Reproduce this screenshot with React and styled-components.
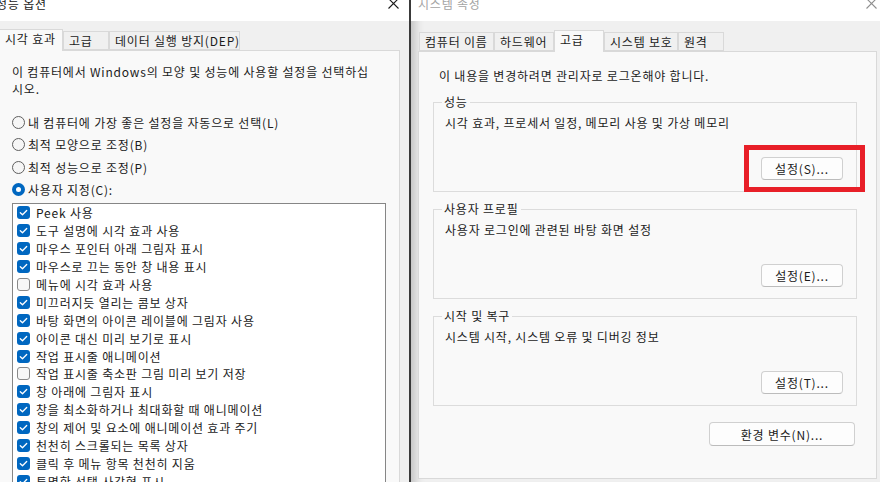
import React from "react";
import styled, { createGlobalStyle } from "styled-components";

const GlobalStyle = createGlobalStyle`
  html, body {
    margin: 0;
    padding: 0;
    overflow: hidden;
    background: #f0f0f0;
  }
  body {
    font-family: "Noto Sans CJK KR", "Noto Sans", sans-serif;
    font-size: 12px;
    letter-spacing: 0.8px;
    color: #1b1b1b;
  }
  * { box-sizing: border-box; }
`;

const VISUAL_OPTIONS = [
  ["Peek 사용", true],
  ["도구 설명에 시각 효과 사용", true],
  ["마우스 포인터 아래 그림자 표시", true],
  ["마우스로 끄는 동안 창 내용 표시", true],
  ["메뉴에 시각 효과 사용", false],
  ["미끄러지듯 열리는 콤보 상자", true],
  ["바탕 화면의 아이콘 레이블에 그림자 사용", true],
  ["아이콘 대신 미리 보기로 표시", true],
  ["작업 표시줄 애니메이션", true],
  ["작업 표시줄 축소판 그림 미리 보기 저장", false],
  ["창 아래에 그림자 표시", true],
  ["창을 최소화하거나 최대화할 때 애니메이션", true],
  ["창의 제어 및 요소에 애니메이션 효과 주기", true],
  ["천천히 스크롤되는 목록 상자", true],
  ["클릭 후 메뉴 항목 천천히 지움", true],
  ["투명한 선택 사각형 표시", true],
  ["화면 글꼴의 가장자리 다듬기", true],
];

const PRESETS = [
  ["내 컴퓨터에 가장 좋은 설정을 자동으로 선택(L)", false],
  ["최적 모양으로 조정(B)", false],
  ["최적 성능으로 조정(P)", false],
  ["사용자 지정(C):", true],
];

const LEFT_TABS = [
  ["시각 효과", 64, true],
  ["고급", 46, false],
  ["데이터 실행 방지(DEP)", 131, false],
];

const RIGHT_TABS = [
  ["컴퓨터 이름", 75, false],
  ["하드웨어", 60, false],
  ["고급", 50, true],
  ["시스템 보호", 74, false],
  ["원격", 46, false],
];

const GROUPS = [
  ["성능", "시각 효과, 프로세서 일정, 메모리 사용 및 가상 메모리", "설정(S)...", true],
  ["사용자 프로필", "사용자 로그인에 관련된 바탕 화면 설정", "설정(E)...", false],
  ["시작 및 복구", "시스템 시작, 시스템 오류 및 디버깅 정보", "설정(T)...", false],
];

function CloseGlyph({ color }) {
  return (
    <svg width="11" height="11" viewBox="0 0 11 11">
      <path d="M0.5 0.5 L10.5 10.5 M10.5 0.5 L0.5 10.5" stroke={color} strokeWidth="1.1" fill="none" />
    </svg>
  );
}

function CheckMark() {
  return (
    <svg width="13" height="13" viewBox="0 0 13 13">
      <path d="M3.3 6.7 L5.5 8.8 L9.7 4.5" stroke="#fff" strokeWidth="1.3" fill="none" strokeLinecap="round" strokeLinejoin="round" />
    </svg>
  );
}

export default function App() {
  return (
    <Screen>
      <GlobalStyle />
      <LeftWindow>
        <TitleBar $padRight={10}>
          <Title $shift={-4}>성능 옵션</Title>
          <CloseButton>
            <CloseGlyph color="#1b1b1b" />
          </CloseButton>
        </TitleBar>
        <DialogBody $padLeft={0} $padRight={9} $shift={-1}>
          <TabStrip $h={29}>
            {LEFT_TABS.map(([label, w, active]) => (
              <Tab key={label} $w={w} $active={active}>
                {label}
              </Tab>
            ))}
          </TabStrip>
          <TabPage $padTop={12} $padX={12} $padRight={13}>
            <Intro>
              이 컴퓨터에서 Windows의 모양 및 성능에 사용할 설정을 선택하십
              <br />
              시오.
            </Intro>
            <RadioList>
              {PRESETS.map(([label, on]) => (
                <RadioRow key={label}>
                  <RadioDot $on={on} />
                  {label}
                </RadioRow>
              ))}
            </RadioList>
            <CheckList>
              {VISUAL_OPTIONS.map(([label, on]) => (
                <CheckRow key={label}>
                  <CheckBox $on={on}>{on && <CheckMark />}</CheckBox>
                  {label}
                </CheckRow>
              ))}
            </CheckList>
          </TabPage>
        </DialogBody>
      </LeftWindow>

      <Divider />

      <RightWindow>
        <TitleBar $padRight={3}>
          <Title $inactive $shift={7}>시스템 속성</Title>
          <CloseButton>
            <CloseGlyph color="#8f8f8f" />
          </CloseButton>
        </TitleBar>
        <DialogBody $padLeft={7} $padRight={3} $shift={0}>
          <TabStrip $h={30} $indent={1}>
            {RIGHT_TABS.map(([label, w, active]) => (
              <Tab key={label} $w={w} $active={active}>
                {label}
              </Tab>
            ))}
          </TabStrip>
          <TabPage $padTop={16} $padX={14} $padRight={19} $bottom>
            <Notice>이 내용을 변경하려면 관리자로 로그온해야 합니다.</Notice>
            <GroupStack>
              {GROUPS.map(([title, text, button, marked]) => (
                <GroupBox key={title}>
                  <GroupLabel>{title}</GroupLabel>
                  <GroupBody>
                    <GroupText>{text}</GroupText>
                    {marked ? (
                      <Highlight>
                        <PushButton $w={82}>{button}</PushButton>
                      </Highlight>
                    ) : (
                      <ButtonSlot>
                        <PushButton $w={82}>{button}</PushButton>
                      </ButtonSlot>
                    )}
                  </GroupBody>
                </GroupBox>
              ))}
            </GroupStack>
            <FooterRow>
              <PushButton $w={146} $h={24}>환경 변수(N)...</PushButton>
            </FooterRow>
          </TabPage>
        </DialogBody>
      </RightWindow>
    </Screen>
  );
}

const Screen = styled.main`
  display: flex;
  width: 880px;
  height: 482px;
  overflow: hidden;
  background: #f0f0f0;
`;

const LeftWindow = styled.section`
  width: 409px;
  flex: none;
  display: flex;
  flex-direction: column;
  overflow: hidden;
  background: #f0f0f0;
`;

const Divider = styled.div`
  width: 2px;
  flex: none;
  background: #3a3a3a;
`;

const RightWindow = styled.section`
  flex: 1;
  display: flex;
  flex-direction: column;
  overflow: hidden;
  background: #f0f0f0;
  box-shadow: inset 12px 0 10px -8px rgba(0, 0, 0, 0.2);
`;

const TitleBar = styled.header`
  height: 21px;
  flex: none;
  display: flex;
  justify-content: space-between;
  align-items: flex-start;
  padding-right: ${(p) => p.$padRight}px;
  background: #ffffff;
  overflow: hidden;
`;

const Title = styled.span`
  margin-top: -4px;
  margin-left: ${(p) => p.$shift}px;
  font-size: 12px;
  line-height: 16px;
  color: ${(p) => (p.$inactive ? "#a3a3a3" : "#1b1b1b")};
  white-space: nowrap;
`;

const CloseButton = styled.span`
  display: flex;
  margin-top: -2px;
`;

const DialogBody = styled.div`
  flex: 1;
  display: flex;
  flex-direction: column;
  padding: 0 ${(p) => p.$padRight}px 0 ${(p) => p.$padLeft}px;
  margin-left: ${(p) => p.$shift}px;
  min-height: 0;
`;

const TabStrip = styled.div`
  height: ${(p) => p.$h}px;
  flex: none;
  display: flex;
  align-items: flex-end;
  padding-left: ${(p) => p.$indent || 0}px;
  position: relative;
  z-index: 1;
`;

const Tab = styled.div`
  width: ${(p) => p.$w}px;
  height: ${(p) => (p.$active ? 22 : 19)}px;
  margin-bottom: ${(p) => (p.$active ? -1 : 0)}px;
  padding: 0 0 0 5px;
  border: 1px solid #d9d9d9;
  border-bottom: ${(p) => (p.$active ? "none" : "1px solid #d9d9d9")};
  background: ${(p) => (p.$active ? "#f9f9f9" : "#f0f0f0")};
  font-size: 12px;
  line-height: 17px;
  white-space: nowrap;
  overflow: hidden;
  color: #1b1b1b;
`;

const TabPage = styled.div`
  flex: 1;
  display: flex;
  flex-direction: column;
  padding: ${(p) => p.$padTop}px ${(p) => p.$padRight}px 0 ${(p) => p.$padX}px;
  background: #f9f9f9;
  border: 1px solid #d9d9d9;
  margin-bottom: ${(p) => (p.$bottom ? 3 : -40)}px;
  min-height: 0;
`;

const Intro = styled.p`
  margin: 0;
  line-height: 17px;
  white-space: nowrap;
`;

const RadioList = styled.div`
  margin-top: 14px;
  display: flex;
  flex-direction: column;
`;

const RadioRow = styled.label`
  height: 22.5px;
  display: flex;
  align-items: center;
  gap: 3px;
  white-space: nowrap;
`;

const RadioDot = styled.span`
  width: 13px;
  height: 13px;
  flex: none;
  border-radius: 50%;
  display: flex;
  align-items: center;
  justify-content: center;
  border: ${(p) => (p.$on ? "none" : "1px solid #5f5f5f")};
  background: ${(p) => (p.$on ? "#0067c0" : "#f6f6f6")};
  &::after {
    content: "";
    display: ${(p) => (p.$on ? "block" : "none")};
    width: 5px;
    height: 5px;
    border-radius: 50%;
    background: #ffffff;
  }
`;

const CheckList = styled.div`
  margin-top: 2px;
  width: 374px;
  padding: 0 0 0 4px;
  border: 1px solid #868686;
  background: #ffffff;
  display: flex;
  flex-direction: column;
`;

const CheckRow = styled.label`
  height: 17.9px;
  flex: none;
  display: flex;
  align-items: center;
  gap: 6px;
  white-space: nowrap;
`;

const CheckBox = styled.span`
  width: 13px;
  height: 13px;
  flex: none;
  display: flex;
  border-radius: 3px;
  border: ${(p) => (p.$on ? "none" : "1px solid #8a8a8a")};
  background: ${(p) => (p.$on ? "#0067c0" : "#f7f7f7")};
`;

const Notice = styled.p`
  margin: 0 0 0 6px;
  line-height: 16px;
  white-space: nowrap;
`;

const GroupStack = styled.div`
  margin-top: 11px;
  display: flex;
  flex-direction: column;
  gap: 10px;
`;

const GroupBox = styled.fieldset`
  margin: 0;
  padding: 0;
  border: 1px solid #dcdcdc;
  min-width: 0;
`;

const GroupLabel = styled.legend`
  margin-left: 8px;
  padding: 0 2px;
  line-height: 14px;
  font-size: 12px;
  color: #1b1b1b;
`;

const GroupBody = styled.div`
  height: 82px;
  display: flex;
  flex-direction: column;
  padding: 6px 13px 11px 11px;
`;

const GroupText = styled.p`
  margin: 0;
  line-height: 16px;
  white-space: nowrap;
`;

const ButtonSlot = styled.div`
  margin-top: auto;
  align-self: flex-end;
  display: flex;
`;

const Highlight = styled(ButtonSlot)`
  position: relative;
  &::after {
    content: "";
    position: absolute;
    top: -12px;
    left: -17px;
    right: -22px;
    bottom: -12px;
    border: 5px solid #e81f28;
    pointer-events: none;
  }
`;

const PushButton = styled.button`
  width: ${(p) => p.$w}px;
  height: ${(p) => p.$h || 23}px;
  padding: 0;
  border: 1px solid #d0d0d0;
  border-bottom-color: #bcbcbc;
  border-radius: 4px;
  background: #fdfdfd;
  font-family: inherit;
  font-size: 12px;
  letter-spacing: inherit;
  color: #1b1b1b;
  white-space: nowrap;
`;

const FooterRow = styled.div`
  margin-top: 16px;
  display: flex;
  justify-content: flex-end;
  padding-right: 2px;
`;
